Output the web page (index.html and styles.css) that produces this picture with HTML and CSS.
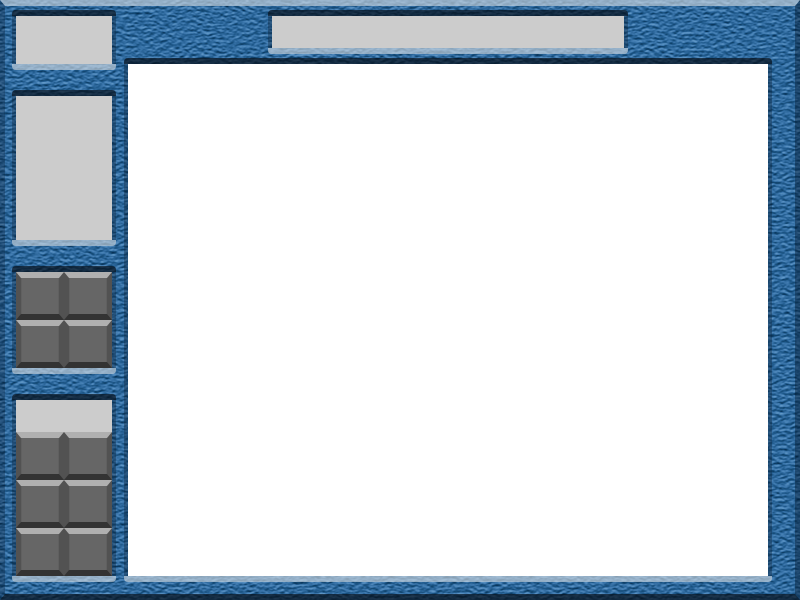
FILE: index.html
```
<!DOCTYPE html>
<html lang="en">
<head>
<meta charset="utf-8">
<meta name="viewport" content="width=device-width, initial-scale=1">
<title>Console</title>
<link rel="stylesheet" href="styles.css">
</head>
<body>
<svg class="texture" aria-hidden="true">
  <filter id="leather" x="0" y="0" width="100%" height="100%" color-interpolation-filters="sRGB">
    <feTurbulence type="fractalNoise" baseFrequency="0.2 0.36" numOctaves="3" seed="8"/>
    <feDiffuseLighting surfaceScale="1" diffuseConstant="1" lighting-color="#fff">
      <feDistantLight azimuth="265" elevation="35"/>
    </feDiffuseLighting>
    <feComponentTransfer>
      <feFuncR type="table" tableValues="0 .03 .08 .14 .24 .36 .46"/>
      <feFuncG type="table" tableValues=".12 .20 .29 .37 .47 .58 .67"/>
      <feFuncB type="table" tableValues=".24 .35 .46 .57 .68 .77 .84"/>
    </feComponentTransfer>
  </filter>
  <rect width="100%" height="100%" filter="url(#leather)"/>
</svg>
<div class="frame">
  <aside class="sidebar">
    <section class="inset badge"></section>
    <section class="inset info"></section>
    <section class="inset keys">
      <button aria-label="Key 1"></button><button aria-label="Key 2"></button>
      <button aria-label="Key 3"></button><button aria-label="Key 4"></button>
    </section>
    <section class="inset tools">
      <div class="readout"></div>
      <div class="keys">
        <button aria-label="Tool 1"></button><button aria-label="Tool 2"></button>
        <button aria-label="Tool 3"></button><button aria-label="Tool 4"></button>
        <button aria-label="Tool 5"></button><button aria-label="Tool 6"></button>
      </div>
    </section>
  </aside>
  <main class="workspace">
    <header class="inset title"></header>
    <section class="inset canvas"></section>
  </main>
</div>
</body>
</html>
```
FILE: styles.css
```
* { box-sizing: border-box; }

body {
  margin: 0;
  background: #2b639c;
  font-family: "Liberation Sans", sans-serif;
}

.texture {
  position: fixed;
  inset: 0;
  width: 100%;
  height: 100%;
}

.frame {
  position: relative;
  display: grid;
  grid-template-columns: 96px 1fr;
  gap: 16px;
  min-height: 100vh;
  padding: 10px 27px 18px 11px;
  border-style: solid;
  border-width: 6px 5px;
  border-color: rgba(202, 212, 222, .66) rgba(8, 28, 50, .45) rgba(8, 16, 24, .68) rgba(8, 28, 50, .32);
}

.sidebar {
  display: flex;
  flex-direction: column;
  gap: 32px;
}

.workspace {
  display: flex;
  flex-direction: column;
  gap: 16px;
}

.inset {
  position: relative;
  background: #ccc;
}

/* Carved edge around each opening: shaded sides, shadow above, highlight below. */
.inset::before,
.inset::after {
  content: "";
  position: absolute;
  border: solid rgba(8, 28, 50, .35);
  pointer-events: none;
}

.inset::before {
  inset: 0 -4px;
  border-width: 0 4px;
}

.inset::after {
  inset: -6px -4px;
  border-width: 6px 0;
  border-color: rgba(8, 16, 24, .68) transparent rgba(202, 212, 222, .66);
  border-radius: 4px;
}

.badge { height: 48px; }
.info { height: 144px; }
.tools { flex: 1; }
.readout { height: 32px; }

.keys {
  display: grid;
  grid-template-columns: 1fr 1fr;
  grid-auto-rows: 48px;
}

.keys button {
  padding: 0;
  background: #666;
  border-style: solid;
  border-width: 6px 5px;
  border-color: #b0b0b0 #525252 #333;
  box-shadow: inset 1px 0 #606060, inset -1px 0 #606060;
}

.title {
  width: 55%;
  height: 32px;
  align-self: center;
}

.canvas {
  flex: 1;
  background: #fff;
}
```
